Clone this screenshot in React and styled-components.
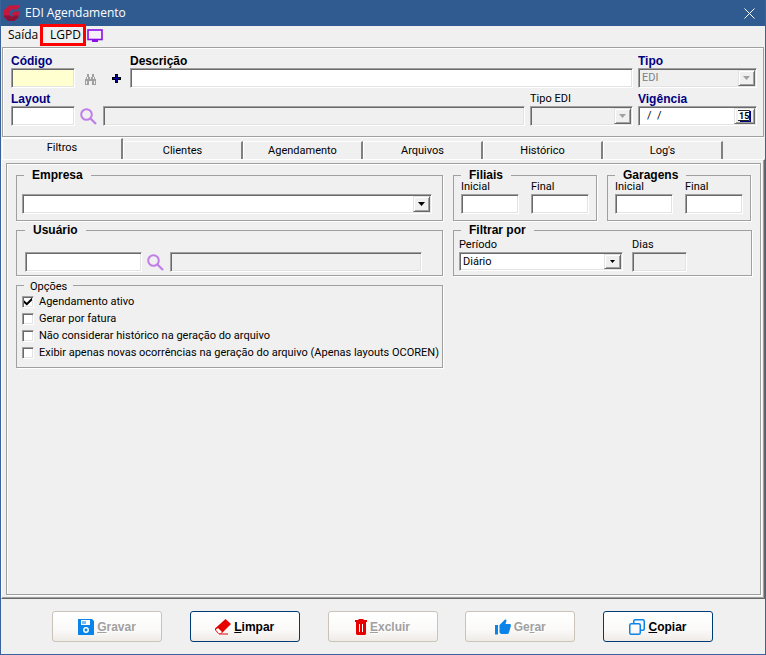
import React, { useState } from "react"
import styled, { createGlobalStyle, css } from "styled-components"

const GlobalStyle = createGlobalStyle`
  * {
    box-sizing: border-box;
  }
  body {
    margin: 0;
    background: #f0f0f0;
    color: #000;
    font: 11px/14px Roboto, "Liberation Sans", sans-serif;
  }
  input,
  select,
  button {
    font: inherit;
    color: inherit;
    margin: 0;
  }
`

const boldText = css`
  font-family: "Liberation Sans", Arial, sans-serif;
  font-size: 12px;
  font-weight: bold;
`

const sunken = css`
  border: 1px solid;
  border-color: #a0a0a0 #fff #fff #a0a0a0;
  box-shadow: inset 1px 1px #696969, inset -1px -1px #e3e3e3;
`

const raised = css`
  border: 1px solid;
  border-color: #e3e3e3 #696969 #696969 #e3e3e3;
  box-shadow: inset 1px 1px #fff, inset -1px -1px #a0a0a0;
`

const Window = styled.div`
  min-height: 100vh;
  display: flex;
  flex-direction: column;
  background: #f0f0f0;
  border: 1px solid #3a6399;
  border-top: none;
`

const TitleBar = styled.header`
  height: 26px;
  padding: 0 9px 0 3px;
  display: flex;
  align-items: center;
  gap: 5px;
  background: #2f5b91;
  color: #fff;
`

const Title = styled.h1`
  flex: 1;
  margin: 0;
  font: 12px/16px "Open Sans", "Noto Sans", sans-serif;
`

const CloseButton = styled.button`
  width: 14px;
  height: 14px;
  padding: 0;
  display: flex;
  align-items: center;
  justify-content: center;
  border: none;
  background: none;
`

const MenuBar = styled.nav`
  height: 18px;
  margin-bottom: 3px;
  padding: 0 7px;
  display: flex;
  align-items: center;
  font: 12px/16px "Open Sans", "Noto Sans", sans-serif;
`

const MenuLink = styled.a`
  color: #000;
  text-decoration: none;
  width: 32px;
`

const MarkedLink = styled(MenuLink)`
  width: 46px;
  height: 22px;
  padding: 0 0 0 7px;
  display: flex;
  align-items: center;
  border: 3px solid #f00;
  margin-right: 1px;
`

const Header = styled.section`
  margin: 0 1px;
  padding: 6px 6px 10px 8px;
  display: flex;
  flex-direction: column;
  gap: 4px;
  border: 1px solid #a0a0a0;
  box-shadow: inset 1px 1px #fff, 0 1px #fff;
`

const HeaderRow = styled.div`
  display: flex;
  align-items: flex-end;
  gap: 5px;
`

const Field = styled.div`
  display: flex;
  flex-direction: column;
  flex: ${props => (props.$width ? `0 0 ${props.$width}px` : "1")};
  min-width: 0;
`

const Label = styled.label`
  height: 14px;
  white-space: nowrap;
  color: ${props => (props.$required ? "#000080" : "#000")};
  ${props => props.$bold && boldText}
`

const Input = styled.input`
  width: 100%;
  height: 20px;
  padding: 0 3px;
  outline: none;
  border-radius: 0;
  background: ${props => (props.$active ? "#ffffcf" : "#fff")};
  ${sunken}
  &:disabled {
    background: #f0f0f0;
  }
`

const Tools = styled.div`
  width: ${props => props.$width}px;
  height: 20px;
  display: flex;
  align-items: center;
  justify-content: space-between;
  padding: 0 ${props => props.$inset || 0}px;
`

const ToolButton = styled.button`
  padding: 0;
  display: flex;
  border: none;
  background: none;
`

const ComboBox = styled.div`
  display: flex;
  height: ${props => props.$height || 20}px;
  padding: 1px;
  ${sunken}
  background: ${props => (props.$disabled ? "#f0f0f0" : "#fff")};
`

const ComboSelect = styled.select`
  appearance: none;
  flex: 1;
  min-width: 0;
  padding: 0 2px;
  border: none;
  outline: none;
  background: transparent;
  &:disabled {
    color: #808080;
    opacity: 1;
  }
`

const DateInput = styled.input`
  flex: 1;
  min-width: 0;
  padding: 0 7px;
  border: none;
  outline: none;
  background: transparent;
  white-space: pre;
`

const ComboArrow = styled.span`
  width: 17px;
  display: flex;
  align-items: center;
  justify-content: center;
  background: #f0f0f0;
  pointer-events: none;
  ${raised}
`

const CalendarButton = styled.button`
  width: 21px;
  padding: 0;
  display: flex;
  align-items: center;
  justify-content: center;
  background: #f0f0f0;
  ${raised}
`

const TabStrip = styled.div`
  height: 21px;
  margin-top: 1px;
  padding-left: 1px;
  display: flex;
  align-items: flex-end;
`

const Tab = styled.button`
  width: 120px;
  height: ${props => (props.$selected ? "21px" : "18px")};
  padding: 0 0 ${props => (props.$selected ? "3px" : "0")};
  border: 1px solid;
  border-width: 1px 2px 0 1px;
  border-color: #fff #808080 #fff #fff;
  background: #f0f0f0;
  &:first-child {
    width: 121px;
  }
`

const TabPage = styled.main`
  flex: 1;
  display: flex;
  padding: 3px 3px 3px 4px;
  border: 1px solid;
  border-color: #fff #696969 #696969 #fff;
  box-shadow: inset -1px -1px #a0a0a0;
`

const PageBody = styled.div`
  flex: 1;
  display: flex;
  align-items: flex-start;
  gap: 10px;
  padding: 6px 8px 6px 9px;
  border: 1px solid #a0a0a0;
  box-shadow: inset 1px 1px #fff, 1px 1px #fff;
`

const Column = styled.div`
  flex: ${props => (props.$width ? `0 0 ${props.$width}px` : "1")};
  min-width: 0;
  display: flex;
  flex-direction: column;
  gap: 4px;
`

const Pair = styled.div`
  display: flex;
  gap: 10px;
`

const Group = styled.fieldset`
  width: ${props => (props.$width ? `${props.$width}px` : "auto")};
  min-width: 0;
  height: ${props => props.$height}px;
  margin: 0;
  padding: 0 ${props => props.$end || 5}px 0 ${props => props.$inset || 5}px;
  border: 1px solid #a0a0a0;
  box-shadow: 1px 1px #fff;
`

const Legend = styled.legend`
  height: 10px;
  margin-left: ${props => props.$indent || 0}px;
  padding: 0 8px;
  line-height: 10px;
  ${boldText}
`

const PlainLegend = styled.legend`
  height: 10px;
  margin-left: 2px;
  padding: 0 6px;
`

const GroupRow = styled.div`
  display: flex;
  align-items: flex-start;
  gap: ${props => props.$gap || 0}px;
  padding-top: ${props => props.$top || 0}px;
`

const OptionList = styled.div`
  padding-top: 3px;
`

const Option = styled.label`
  height: 17px;
  display: flex;
  align-items: center;
  gap: 5px;
  white-space: nowrap;
`

const CheckBox = styled.input`
  appearance: none;
  flex: none;
  width: 12px;
  height: 12px;
  display: grid;
  place-content: center;
  background: #fff;
  ${sunken}
  &:checked::after {
    content: "";
    width: 8px;
    height: 8px;
    background: #000;
    clip-path: polygon(0 35%, 35% 65%, 100% 0, 100% 38%, 35% 100%, 0 70%);
  }
`

const Footer = styled.footer`
  height: 55px;
  padding: 12px 52px 0 51px;
  display: flex;
  justify-content: space-between;
`

const ActionButton = styled.button`
  width: 110px;
  height: 31px;
  padding: 0;
  display: flex;
  align-items: center;
  justify-content: center;
  gap: 3px;
  border: 1px solid #003c74;
  border-radius: 3px;
  background: linear-gradient(#fff, #fbfaf9 60%, #efebe7);
  ${boldText}
  &:disabled {
    border-color: #c9c3ba;
    color: #a0a0a0;
    text-shadow: 1px 1px #fff;
  }
`

const Arrow = ({ color = "#000", small }) => (
  <svg width={small ? 5 : 7} height={small ? 3 : 4} viewBox="0 0 7 4">
    <path d="M0 0h7L3.5 4z" fill={color} />
  </svg>
)

const SearchIcon = () => (
  <svg width="17" height="17" viewBox="0 0 17 17" fill="none" stroke="#c07ee8">
    <circle cx="6.5" cy="6.5" r="5.3" strokeWidth="2" />
    <path d="M10.5 10.5l5.5 5.5" strokeWidth="2.2" />
  </svg>
)

const BinocularsIcon = () => (
  <svg width="13" height="18" viewBox="0 0 13 18">
    <path
      fill="#a0a0a0"
      d="M3 5h2v3h1v2h1V8h1V5h2v3h1v2h1v6H8v-4H5v4H1v-6h1V8h1z"
    />
    <path fill="#f0f0f0" d="M2 12h1v3H2zM10 12h1v3h-1zM3 8h1v2H3zM9 8h1v2H9z" />
  </svg>
)

const PlusIcon = () => (
  <svg width="9" height="9" viewBox="0 0 9 9">
    <path d="M3 0h3v3h3v3H6v3H3V6H0V3h3z" />
    <path d="M4 1h1v3h3v1H5v3H4V5H1V4h3z" fill="#0000a0" />
  </svg>
)

const MonitorIcon = () => (
  <svg width="16" height="13" viewBox="0 0 16 13">
    <rect x="1" y="1" width="14" height="9.5" fill="#f5f0fa" stroke="#8a0fe6" strokeWidth="1.6" />
    <path d="M5 11h6v2H5z" fill="#8a0fe6" />
  </svg>
)

const CalendarIcon = () => (
  <svg width="13" height="12" viewBox="0 0 13 12">
    <path d="M2 11h10V1h1v11H2z" fill="#000080" />
    <path d="M0 0h12v11H0z" fill="#fff" />
    <path d="M0 0.500h11.500V10.500H0" fill="none" stroke="#222" />
    <text x="1" y="9" fontSize="9" fontWeight="bold">15</text>
  </svg>
)

const Logo = () => (
  <svg width="16" height="16" viewBox="0 0 16 16">
    <path
      fill="#c4183f"
      d="M5 0.500L16 0L13.500 4.500H8L5.500 7V9.500L7 11.500H9.500L10 10H7.500L9.500 6.500H15.500L14 13L10 16H4L0 12V5z"
    />
    <path
      fill="#8c1238"
      d="M0 10.500H6L7 11.500H9.500L9.800 10.500H14.600L14 13L10 16H4L0 12z"
    />
  </svg>
)

const SaveIcon = () => (
  <svg width="16" height="16" viewBox="0 0 16 16">
    <path d="M0 0h14l2 2v14H0z" fill="#0a84e8" />
    <path d="M3 1h9v5H3z" fill="#fff" />
    <path d="M4 2h4v3H4z" fill="#7dbcf2" />
    <circle cx="8" cy="11" r="2.200" fill="none" stroke="#fff" strokeWidth="1.500" />
  </svg>
)

const EraserIcon = () => (
  <svg width="16" height="16" viewBox="0 0 16 16">
    <path d="M10.500 0L16 5L6.500 14.500H3L0 11V9.500z" fill="#e60000" />
    <path d="M3 9L7 13L6 14H3.500L1 11V10.500z" fill="#fff" />
    <path d="M4 14.500h9v1H4z" fill="#e60000" />
  </svg>
)

const TrashIcon = () => (
  <svg width="12" height="16" viewBox="0 0 12 16">
    <path d="M0 1h3.500V0h5v1H12v2H0zM1 3h10v12l-1 1H2l-1-1z" fill="#e60000" />
    <path d="M4 5h1v8H4zM7 5h1v8H7z" fill="#fff" />
  </svg>
)

const ThumbIcon = () => (
  <svg width="16" height="16" viewBox="0 0 16 16" fill="#0a84e8">
    <path d="M0 6h3v9.500H0z" />
    <path d="M4.500 6L10 0.500Q11.500 0 11.500 1.500L10.500 5H15Q16 5 16 6.500L14 13.500Q13.500 15 12 15H6L4.500 13.500z" />
  </svg>
)

const CopyIcon = () => (
  <svg width="16" height="16" viewBox="0 0 16 16" fill="none" stroke="#0a84e8" strokeWidth="1.500">
    <rect x="0.750" y="4.750" width="10.500" height="10.500" rx="1.500" />
    <path d="M4.750 4.500V2.250q0-1.500 1.500-1.500h7.500q1.500 0 1.500 1.500v7.500q0 1.500-1.500 1.500H11.500" />
  </svg>
)

const tabs = ["Filtros", "Clientes", "Agendamento", "Arquivos", "Histórico", "Log's"]

const options = [
  "Agendamento ativo",
  "Gerar por fatura",
  "Não considerar histórico na geração do arquivo",
  "Exibir apenas novas ocorrências na geração do arquivo (Apenas layouts OCOREN)",
]

const RangeGroup = ({ name, title }) => (
  <Group $height={51} $width={144} $inset={7}>
    <Legend>{title}</Legend>
    <GroupRow $gap={12}>
      <Field $width={58}>
        <Label htmlFor={`${name}-inicial`}>Inicial</Label>
        <Input id={`${name}-inicial`} />
      </Field>
      <Field $width={58}>
        <Label htmlFor={`${name}-final`}>Final</Label>
        <Input id={`${name}-final`} />
      </Field>
    </GroupRow>
  </Group>
)

const App = () => {
  const [tab, setTab] = useState("Filtros")

  return (
    <>
      <GlobalStyle />
      <Window>
        <TitleBar>
          <Logo />
          <Title>EDI Agendamento</Title>
          <CloseButton aria-label="Fechar">
            <svg width="11" height="11" viewBox="0 0 11 11" stroke="#fff">
              <path d="M0.500 0.500l10 10M10.500 0.500l-10 10" />
            </svg>
          </CloseButton>
        </TitleBar>
        <MenuBar>
          <MenuLink href="#saida">Saída</MenuLink>
          <MarkedLink href="#lgpd">LGPD</MarkedLink>
          <MonitorIcon />
        </MenuBar>

        <Header>
          <HeaderRow>
            <Field $width={64}>
              <Label htmlFor="codigo" $bold $required>Código</Label>
              <Input id="codigo" $active autoFocus />
            </Field>
            <Tools $width={45} $inset={4}>
              <ToolButton aria-label="Procurar">
                <BinocularsIcon />
              </ToolButton>
              <ToolButton aria-label="Novo">
                <PlusIcon />
              </ToolButton>
            </Tools>
            <Field>
              <Label htmlFor="descricao" $bold>Descrição</Label>
              <Input id="descricao" />
            </Field>
            <Field $width={119}>
              <Label htmlFor="tipo" $bold $required>Tipo</Label>
              <ComboBox $disabled>
                <ComboSelect id="tipo" disabled>
                  <option>EDI</option>
                </ComboSelect>
                <ComboArrow>
                  <Arrow color="#a0a0a0" />
                </ComboArrow>
              </ComboBox>
            </Field>
          </HeaderRow>
          <HeaderRow>
            <Field $width={64}>
              <Label htmlFor="layout" $bold $required>Layout</Label>
              <Input id="layout" />
            </Field>
            <Tools $width={18}>
              <ToolButton aria-label="Pesquisar layout">
                <SearchIcon />
              </ToolButton>
            </Tools>
            <Field>
              <Input aria-label="Descrição do layout" disabled />
            </Field>
            <Field $width={103}>
              <Label htmlFor="tipo-edi">Tipo EDI</Label>
              <ComboBox $disabled>
                <ComboSelect id="tipo-edi" disabled />
                <ComboArrow>
                  <Arrow color="#a0a0a0" />
                </ComboArrow>
              </ComboBox>
            </Field>
            <Field $width={119}>
              <Label htmlFor="vigencia" $bold $required>Vigência</Label>
              <ComboBox>
                <DateInput id="vigencia" defaultValue="/  /" />
                <CalendarButton aria-label="Calendário">
                  <CalendarIcon />
                </CalendarButton>
              </ComboBox>
            </Field>
          </HeaderRow>
        </Header>

        <TabStrip role="tablist">
          {tabs.map(name => (
            <Tab
              key={name}
              role="tab"
              aria-selected={tab === name}
              $selected={tab === name}
              onClick={() => setTab(name)}
            >
              {name}
            </Tab>
          ))}
        </TabStrip>
        <TabPage>
          <PageBody>
            <Column $width={427}>
              <Group $height={51} $end={10}>
                <Legend $indent={2}>Empresa</Legend>
                <GroupRow $top={14}>
                  <Field>
                    <ComboBox>
                      <ComboSelect aria-label="Empresa" />
                      <ComboArrow>
                        <Arrow />
                      </ComboArrow>
                    </ComboBox>
                  </Field>
                </GroupRow>
              </Group>
              <Group $height={51} $inset={8} $end={20}>
                <Legend>Usuário</Legend>
                <GroupRow $gap={5} $top={17}>
                  <Field $width={117}>
                    <Input aria-label="Usuário" />
                  </Field>
                  <Tools $width={18}>
                    <ToolButton aria-label="Pesquisar usuário">
                      <SearchIcon />
                    </ToolButton>
                  </Tools>
                  <Field>
                    <Input aria-label="Nome do usuário" disabled />
                  </Field>
                </GroupRow>
              </Group>
              <Group $height={88}>
                <PlainLegend>Opções</PlainLegend>
                <OptionList>
                  {options.map((text, i) => (
                    <Option key={text}>
                      <CheckBox type="checkbox" defaultChecked={i === 0} />
                      {text}
                    </Option>
                  ))}
                </OptionList>
              </Group>
            </Column>
            <Column>
              <Pair>
                <RangeGroup name="filiais" title="Filiais" />
                <RangeGroup name="garagens" title="Garagens" />
              </Pair>
              <Group $height={51}>
                <Legend $indent={2}>Filtrar por</Legend>
                <GroupRow $gap={9} $top={3}>
                  <Field $width={164}>
                    <Label htmlFor="periodo">Período</Label>
                    <ComboBox $height={19}>
                      <ComboSelect id="periodo">
                        <option>Diário</option>
                      </ComboSelect>
                      <ComboArrow>
                        <Arrow small />
                      </ComboArrow>
                    </ComboBox>
                  </Field>
                  <Field $width={55}>
                    <Label htmlFor="dias">Dias</Label>
                    <Input id="dias" disabled />
                  </Field>
                </GroupRow>
              </Group>
            </Column>
          </PageBody>
        </TabPage>

        <Footer>
          <ActionButton disabled>
            <SaveIcon />
            <span><u>G</u>ravar</span>
          </ActionButton>
          <ActionButton>
            <EraserIcon />
            <span><u>L</u>impar</span>
          </ActionButton>
          <ActionButton disabled>
            <TrashIcon />
            <span><u>E</u>xcluir</span>
          </ActionButton>
          <ActionButton disabled>
            <ThumbIcon />
            <span>Ge<u>r</u>ar</span>
          </ActionButton>
          <ActionButton>
            <CopyIcon />
            <span><u>C</u>opiar</span>
          </ActionButton>
        </Footer>
      </Window>
    </>
  )
}

export default App
